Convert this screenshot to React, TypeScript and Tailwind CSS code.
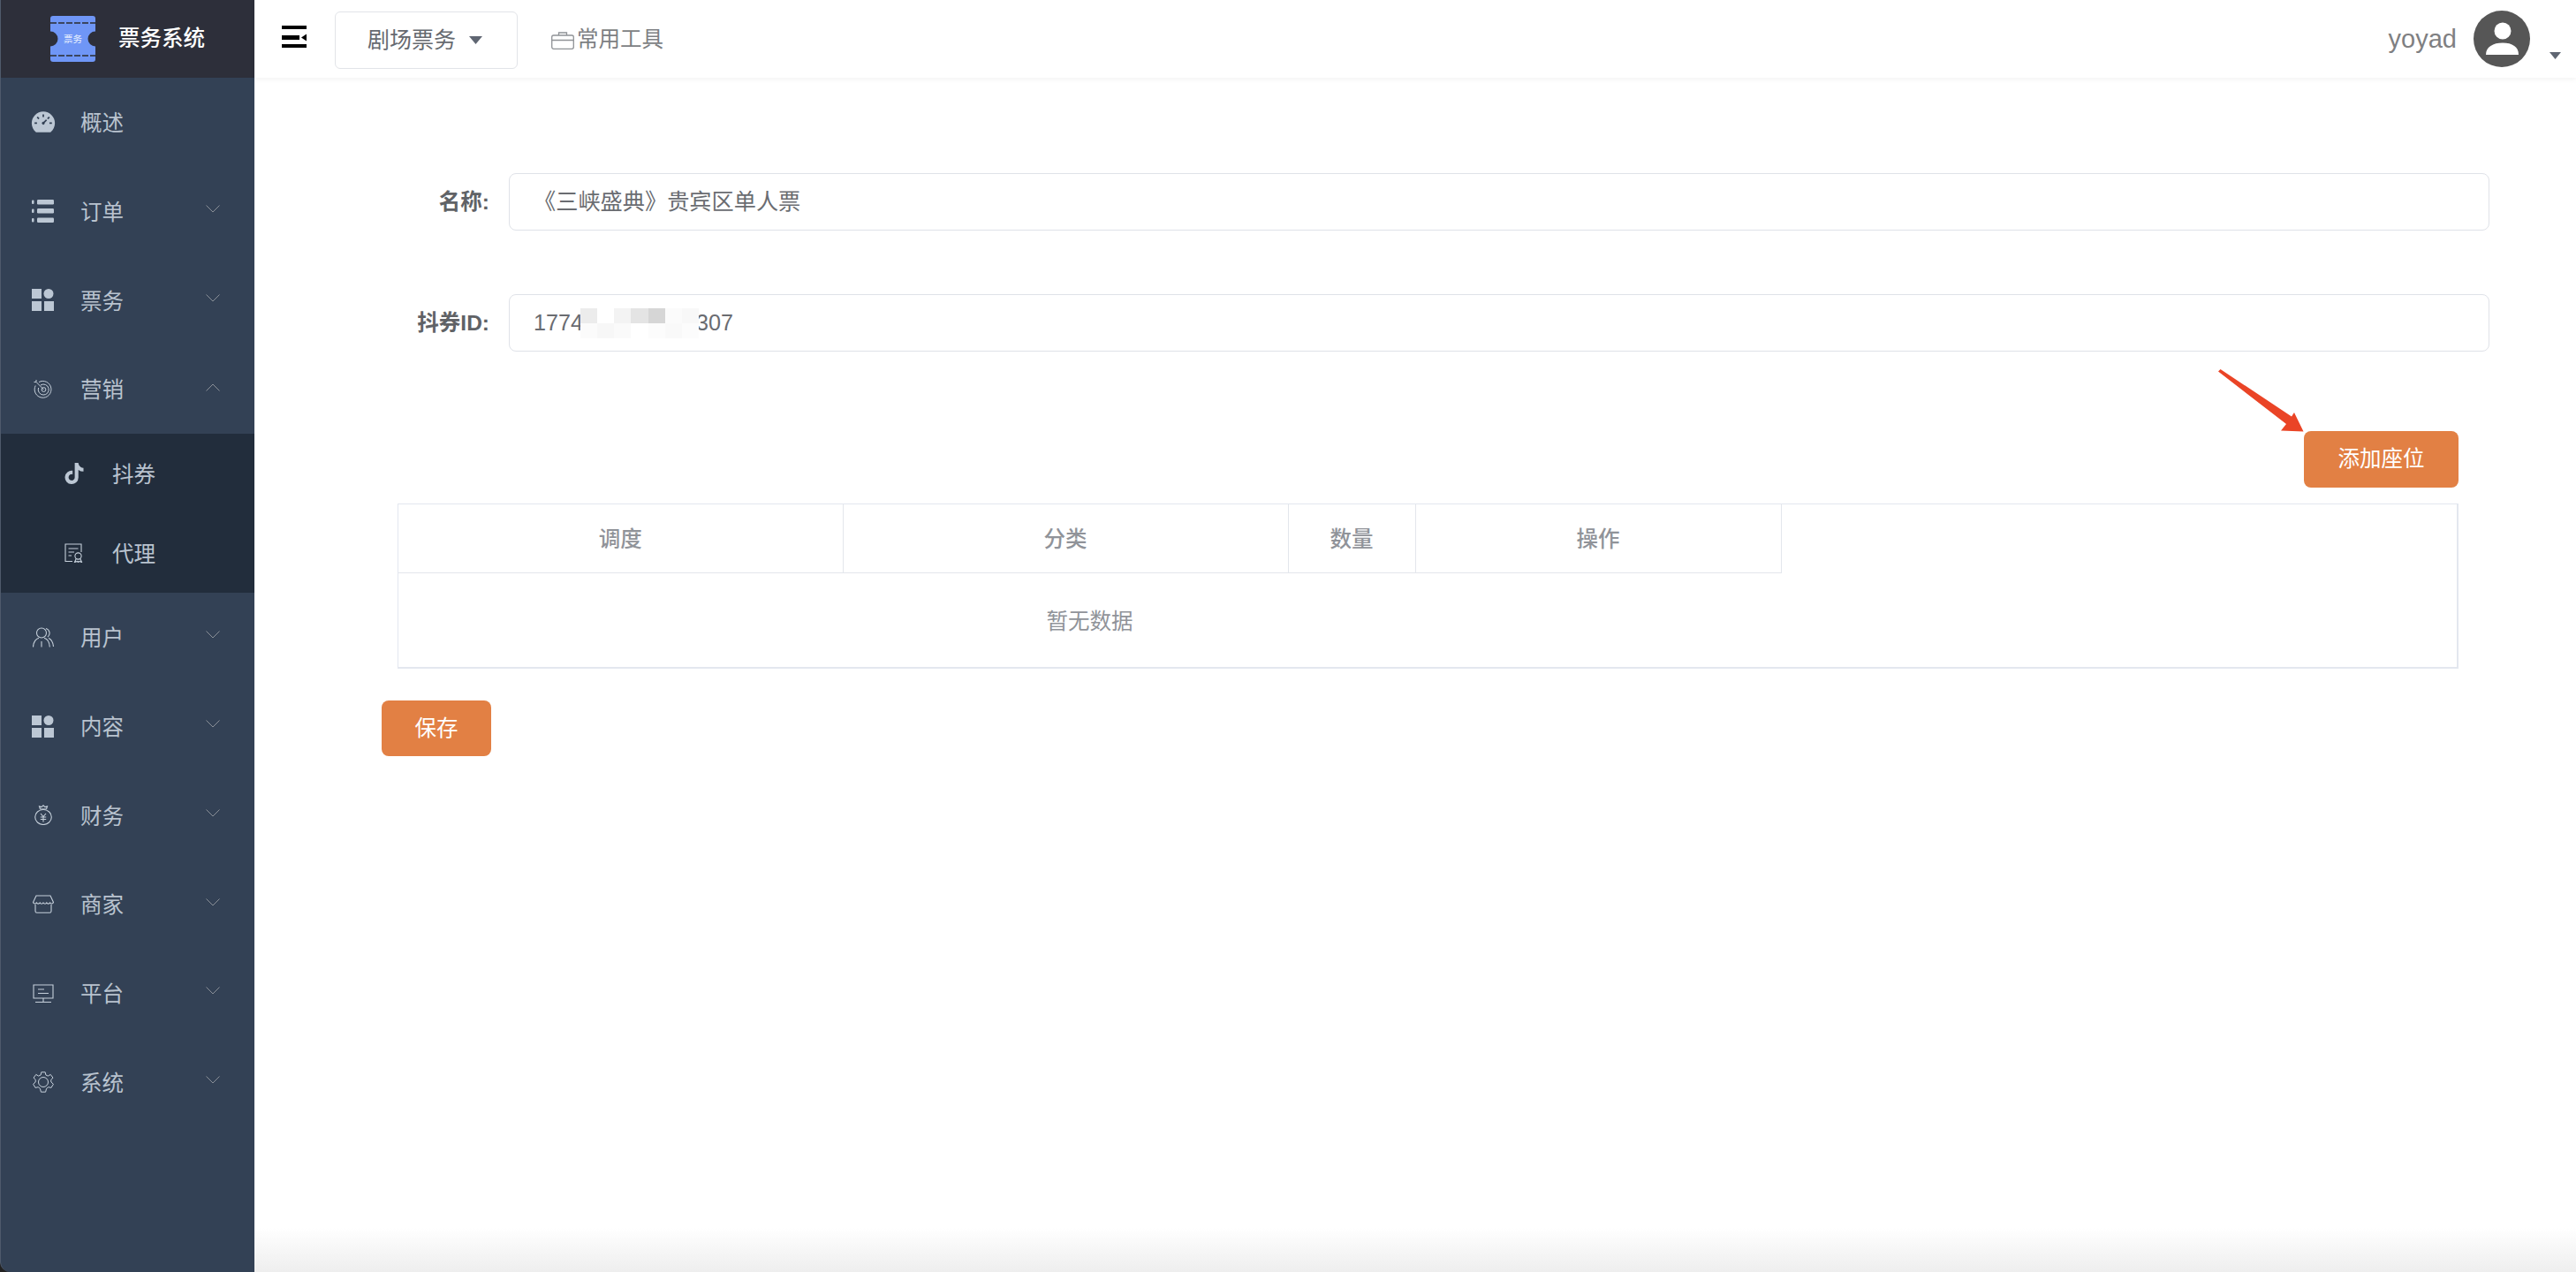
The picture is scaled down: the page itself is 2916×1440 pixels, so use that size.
import type { ReactNode } from "react";
import { FaTiktok } from "react-icons/fa";
import { AiFillDashboard } from "react-icons/ai";

function ChevronIcon({ up }: { up?: boolean }) {
  return (
    <svg width="16" height="9" viewBox="0 0 16 9" fill="none" stroke="#8b9098" strokeWidth="1">
      <polyline points={up ? "0.5,8.5 8,1 15.5,8.5" : "0.5,0.5 8,8 15.5,0.5"} />
    </svg>
  );
}

function ListIcon() {
  return (
    <svg width="25" height="26" viewBox="0 0 25 26" fill="#bcc7d4">
      <rect x="0" y="0.5" width="2.5" height="4.5" rx="1" />
      <rect x="0" y="10.5" width="2.5" height="4.5" rx="1" />
      <rect x="0" y="21" width="2.5" height="4.5" rx="1" />
      <rect x="6" y="0" width="19" height="5.5" rx="1.2" />
      <rect x="6" y="10" width="19" height="5.5" rx="1.2" />
      <rect x="6" y="20.5" width="19" height="5.5" rx="1.2" />
    </svg>
  );
}

function BlocksIcon() {
  return (
    <svg width="25" height="25" viewBox="0 0 25 25" fill="#bcc7d4">
      <rect x="0" y="0" width="11" height="11" />
      <circle cx="19" cy="5.5" r="5.5" />
      <rect x="0" y="14" width="11" height="11" />
      <rect x="14" y="14" width="11" height="11" />
    </svg>
  );
}

function TargetIcon() {
  return (
    <svg width="22" height="21" viewBox="0 0 22 21" fill="none" stroke="#c6d0db" strokeWidth="1">
      <path d="M6 2.6A9.4 9.4 0 1 1 2.2 6.5" />
      <path d="M8 6A6 6 0 1 1 5.6 9" />
      <circle cx="11.5" cy="11" r="2.4" />
      <path d="M11.5 11L3 2.5M3 2.5L0.5 2.5M3 2.5L3 0" />
    </svg>
  );
}

function UsersIcon() {
  return (
    <svg width="24" height="23" viewBox="0 0 24 23" fill="none" stroke="#c6d0db" strokeWidth="1.1">
      <circle cx="10" cy="6.5" r="5.5" />
      <path d="M0.5 22.5C0.7 16.5 4 13 7 12.2M13 12.2C16 13 19 16.5 19.3 22.5" />
      <path d="M10 16v6.5" />
      <path d="M15 1.5a5.5 5.5 0 0 1 2 9.6M18 12.5c3 1.2 5 4.5 5.5 9.5" />
    </svg>
  );
}

function MoneyBagIcon() {
  return (
    <svg width="20" height="23" viewBox="0 0 20 23" fill="none" stroke="#c6d0db" strokeWidth="1.1">
      <path d="M6.5 5L5.5 1.8L8 2.6L10 0.8L12 2.6L14.5 1.8L13.5 5" />
      <path d="M6.5 5H13.5" />
      <ellipse cx="10" cy="14" rx="9.3" ry="8.5" />
      <path d="M7 10L10 13.5L13 10M6.8 14H13.2M6.8 16.5H13.2M10 13.5V19.5" />
    </svg>
  );
}

function ShopIcon() {
  return (
    <svg width="24" height="21" viewBox="0 0 24 21" fill="none" stroke="#c6d0db" strokeWidth="1.1">
      <path d="M4 1H20L23.5 8.5C23 10.5 20.5 10.5 19.7 9C19 10.5 16.5 10.5 15.8 9C15 10.5 13 10.5 12 9C11 10.5 9 10.5 8.2 9C7.5 10.5 5 10.5 4.3 9C3.5 10.5 1 10.5 0.5 8.5Z" />
      <path d="M3 11V18.5C3 19.5 3.7 20.3 4.8 20.3H19.2C20.3 20.3 21 19.5 21 18.5V11" />
    </svg>
  );
}

function MonitorIcon() {
  return (
    <svg width="24" height="21" viewBox="0 0 24 21" fill="none" stroke="#c6d0db" strokeWidth="1.1">
      <path d="M1 1H23V16H1Z" />
      <path d="M6 6H13M6 10.5H18M12 16V20M3 20.5H21" />
    </svg>
  );
}

function GearIcon() {
  return (
    <svg width="24" height="24" viewBox="0 0 24 24" fill="none" stroke="#c6d0db" strokeWidth="1">
      <circle cx="12" cy="12" r="5.5" />
      <path d="M9.8 0.8H14.2L14.9 4L17.4 5.1L20.2 3.4L23 7.2L20.7 9.4L20.9 12L23.4 14.3L21 18.4L17.8 17.7L15.6 19.3L14.6 23.2H9.4L8.4 19.3L6.2 17.7L3 18.4L0.6 14.3L3.1 12L3.3 9.4L1 7.2L3.8 3.4L6.6 5.1L9.1 4Z" strokeLinejoin="round" />
    </svg>
  );
}

function CertIcon() {
  return (
    <svg width="22" height="22" viewBox="0 0 22 22" fill="none" stroke="#c6d0db" strokeWidth="1.1">
      <path d="M9 20.5H1V1H19V10" />
      <path d="M4.5 6H15.5M4.5 10H11M4.5 14H8" />
      <circle cx="15.5" cy="14.5" r="3.6" />
      <path d="M13.2 17.5L11.5 21.5L14.5 20.5L15.5 21.5L16.5 20.5L19.5 21.5L17.8 17.5" />
    </svg>
  );
}

function NavItem({ icon, label, open, chevron = true }: { icon: ReactNode; label: string; open?: boolean; chevron?: boolean }) {
  return (
    <div className="flex h-[100.75px] items-center pl-[35px] pr-[39px] text-[24.5px] text-[#b9c3cf]">
      <span className="mr-[30px] flex w-[25px] justify-center">{icon}</span>
      <span className="pt-[4px]">{label}</span>
      {chevron && (
        <span className="mb-[5px] ml-auto flex">
          <ChevronIcon up={open} />
        </span>
      )}
    </div>
  );
}

function SubItem({ icon, label }: { icon: ReactNode; label: string }) {
  return (
    <div className="flex h-[90px] items-center pl-[72px] text-[24.5px] text-[#b9c3cf]">
      <span className="mr-[32px] flex w-[22px] justify-center">{icon}</span>
      <span className="pt-[5px]">{label}</span>
    </div>
  );
}

function Logo() {
  return (
    <svg width="51" height="52" viewBox="0 0 51 52">
      <rect x="0" y="0" width="51" height="52" rx="3" fill="#6f96f6" />
      <circle cx="0" cy="26" r="8.5" fill="#2d2f3a" />
      <circle cx="51" cy="26" r="8.5" fill="#2d2f3a" />
      <line x1="0" y1="8" x2="51" y2="8" stroke="#3b4660" strokeWidth="2" strokeDasharray="7 2" />
      <line x1="0" y1="45" x2="51" y2="45" stroke="#3b4660" strokeWidth="2" strokeDasharray="7 2" />
      <text x="25.5" y="30" textAnchor="middle" fontSize="10.5" fill="#dbe5fd">票务</text>
    </svg>
  );
}

function Sidebar() {
  return (
    <aside className="flex w-[288px] shrink-0 flex-col overflow-hidden rounded-bl-[12px] border-l border-[#4f5a6b] bg-[#334155]">
      <div className="flex h-[88px] shrink-0 items-center gap-[26px] bg-[#2d2f3a] pl-[56px] text-[24.5px] font-medium text-white">
        <Logo />
        <span>票务系统</span>
      </div>
      <NavItem icon={<AiFillDashboard size={30} color="#bcc7d4" className="shrink-0" />} label="概述" chevron={false} />
      <NavItem icon={<ListIcon />} label="订单" />
      <NavItem icon={<BlocksIcon />} label="票务" />
      <NavItem icon={<TargetIcon />} label="营销" open />
      <div className="bg-[#222d3c]">
        <SubItem icon={<FaTiktok size={24} color="#bcc7d4" className="shrink-0" />} label="抖券" />
        <SubItem icon={<CertIcon />} label="代理" />
      </div>
      <NavItem icon={<UsersIcon />} label="用户" />
      <NavItem icon={<BlocksIcon />} label="内容" />
      <NavItem icon={<MoneyBagIcon />} label="财务" />
      <NavItem icon={<ShopIcon />} label="商家" />
      <NavItem icon={<MonitorIcon />} label="平台" />
      <NavItem icon={<GearIcon />} label="系统" />
    </aside>
  );
}

function Topbar() {
  return (
    <header className="relative flex h-[88px] shrink-0 items-center bg-white pl-[31px] pr-[17px] shadow-[0_2px_6px_rgba(0,0,0,0.05)]">
      <svg className="mb-[5px] mr-[32px]" width="28" height="25" viewBox="0 0 28 25" fill="#000">
        <rect x="0" y="0" width="28" height="4" />
        <rect x="0" y="11" width="20" height="5" />
        <rect x="0" y="21" width="28" height="4" />
        <path d="M22 13.5L28 9.5V17.5Z" />
      </svg>
      <div className="mt-[3px] flex h-[65px] w-[207px] items-center rounded-[6px] border border-[#e2e4e8] pl-[36px] text-[25px] text-[#666a70]">
        <span>剧场票务</span>
        <svg className="ml-[15px]" width="15" height="9" viewBox="0 0 15 9" fill="#5f6672">
          <path d="M0 0H15L7.5 9Z" />
        </svg>
      </div>
      <div className="ml-[38px] mt-[3px] flex items-center text-[24.5px] text-[#7d7f83]">
        <svg className="mr-[3px]" width="26" height="20" viewBox="0 0 26 20" fill="none" stroke="#8f9296" strokeWidth="1.3">
          <rect x="0.7" y="4" width="24.6" height="15.3" rx="2" />
          <path d="M8.5 4V1H17.5V4M0.7 9.5H25.3" />
        </svg>
        <span>常用工具</span>
      </div>
      <span className="ml-auto mr-[19px] mt-[1px] font-['Liberation_Sans',sans-serif] text-[29px] text-[#7f8082]">yoyad</span>
      <svg className="mr-[22px]" width="64" height="64" viewBox="0 0 64 64">
        <circle cx="32" cy="32" r="32" fill="#565656" />
        <circle cx="33" cy="23" r="9.5" fill="#fff" />
        <path d="M14 50C14 41 22 36.5 33 36.5C44 36.5 51 41 51 50Z" fill="#fff" />
      </svg>
      <svg className="mt-[38px]" width="13" height="8" viewBox="0 0 13 8" fill="#5f6672">
        <path d="M0 0H13L6.5 8Z" />
      </svg>
    </header>
  );
}

const mosaic = [
  ["bg-[#ececec]", "bg-white", "bg-[#f3f3f3]", "bg-[#e4e4e4]", "bg-[#d6d6d6]", "bg-[#fbfbfb]", "bg-[#f8f8f8]"],
  ["bg-[#fbfbfb]", "bg-[#f7f7f7]", "bg-[#fafafa]", "bg-white", "bg-[#fcfcfc]", "bg-[#f9f9f9]", "bg-[#fcfcfc]"],
];

function Mosaic() {
  return (
    <span className="relative z-10 mx-[-3px] flex w-[134px] flex-col">
      {mosaic.map((row, i) => (
        <span key={i} className="flex h-[17px]">
          {row.map((c, j) => (
            <span key={j} className={`h-full flex-1 ${c}`} />
          ))}
        </span>
      ))}
    </span>
  );
}

function FieldRow({ label, children, className }: { label: string; children: ReactNode; className?: string }) {
  return (
    <div className={`flex h-[65px] items-center ${className ?? ""}`}>
      <label className="mr-[22px] w-[122px] pt-[2px] text-right text-[24.5px] font-bold text-[#606266]">{label}</label>
      <div className="flex h-full flex-1 items-center rounded-[8px] border border-[#dfe2e8] bg-white pl-[27px] text-[25.2px] text-[#6a6c71]">
        {children}
      </div>
    </div>
  );
}

const headers = [
  { label: "调度", w: "w-[503px]" },
  { label: "分类", w: "w-[504px]" },
  { label: "数量", w: "w-[144px]" },
  { label: "操作", w: "w-[414px]" },
];

function SeatTable() {
  return (
    <div className="ml-[18px] mr-[35px] mt-[18px] h-[187px] border-b-2 border-l border-r-2 border-t border-[#e3e7ef]">
      <table className="w-[1565px] table-fixed border-collapse">
        <thead>
          <tr>
            {headers.map((h) => (
              <th
                key={h.label}
                className={`${h.w} h-[77px] border-b border-r border-[#e3e6ec] pt-[5px] text-center text-[24.5px] font-medium text-[#909399]`}
              >
                {h.label}
              </th>
            ))}
          </tr>
        </thead>
        <tbody>
          <tr>
            <td colSpan={4} className="h-[107px] pt-[6px] text-center text-[24.5px] text-[#909399]">
              暂无数据
            </td>
          </tr>
        </tbody>
      </table>
    </div>
  );
}

export default function App() {
  return (
    <div className="flex h-screen w-full overflow-hidden bg-[#222] font-['Liberation_Sans','Noto_Sans_CJK_SC',sans-serif]">
      <Sidebar />
      <main className="flex min-w-0 flex-1 flex-col bg-white">
        <Topbar />
        <div className="flex flex-col pl-[144px] pr-[98px] pt-[108px]">
          <FieldRow label="名称:">《三峡盛典》贵宾区单人票</FieldRow>
          <FieldRow label="抖券ID:" className="mt-[72px]">
            <span>1774</span>
            <Mosaic />
            <span>307</span>
          </FieldRow>
          <div className="relative mt-[90px] flex justify-end pr-[35px]">
            <svg className="absolute right-[210px] top-[-70px]" width="97" height="71" viewBox="0 0 97 71" fill="#ea4426">
              <path d="M0 2.5L2.5 0L83 53.5L86 49L96.5 70.5L71 69.5L77 62Z" />
            </svg>
            <button className="flex h-[64px] w-[175px] items-center justify-center rounded-[8px] bg-[#e28044] pt-[1px] text-[24.5px] text-white">
              添加座位
            </button>
          </div>
          <SeatTable />
          <div className="mt-[36px]">
            <button className="flex h-[63px] w-[124px] items-center justify-center rounded-[8px] bg-[#e28044] pt-[2px] text-[24.5px] text-white">
              保存
            </button>
          </div>
        </div>
        <div className="mt-auto h-[50px] bg-gradient-to-b from-white to-[#eeeeee]" />
      </main>
    </div>
  );
}
